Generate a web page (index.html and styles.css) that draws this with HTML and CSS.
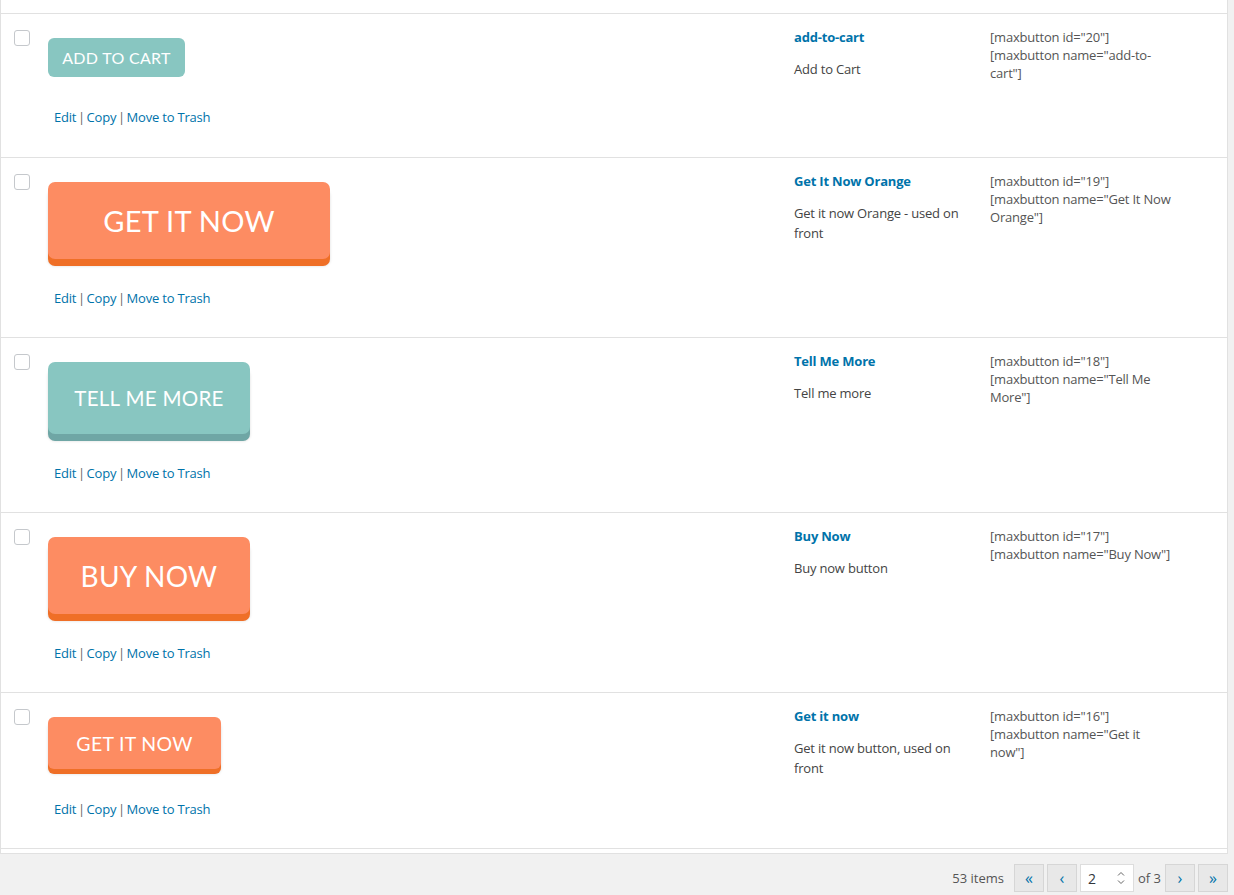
FILE: index.html
```html
<!DOCTYPE html>
<html lang="en">
<head>
    <meta charset="UTF-8">
    <meta name="viewport" content="width=device-width, initial-scale=1.0">
    <title>MaxButtons - Overview</title>
    <link rel="stylesheet" href="styles.css">
</head>
<body>
 <div class="button-list">
  <div class="row-cut"></div>

  <div class="row">
   <div class="col-check"><span class="checkbox"></span></div>
   <div class="col-preview">
    <a class="mb mb-teal mb-cart">Add to Cart</a>
    <div class="row-actions"><a>Edit</a> | <a>Copy</a> | <a>Move to Trash</a></div>
   </div>
   <div class="col-name">
    <a class="name">add-to-cart</a>
    <p class="desc">Add to Cart</p>
   </div>
   <div class="col-code">[maxbutton id="20"]<br>[maxbutton name="add-to-cart"]</div>
   <div class="col-rest"></div>
  </div>

  <div class="row">
   <div class="col-check"><span class="checkbox"></span></div>
   <div class="col-preview">
    <a class="mb mb-orange mb-getbig">Get it now</a>
    <div class="row-actions"><a>Edit</a> | <a>Copy</a> | <a>Move to Trash</a></div>
   </div>
   <div class="col-name">
    <a class="name">Get It Now Orange</a>
    <p class="desc">Get it now Orange - used on front</p>
   </div>
   <div class="col-code">[maxbutton id="19"]<br>[maxbutton name="Get It Now Orange"]</div>
   <div class="col-rest"></div>
  </div>

  <div class="row">
   <div class="col-check"><span class="checkbox"></span></div>
   <div class="col-preview">
    <a class="mb mb-teal mb-tell">Tell me more</a>
    <div class="row-actions"><a>Edit</a> | <a>Copy</a> | <a>Move to Trash</a></div>
   </div>
   <div class="col-name">
    <a class="name">Tell Me More</a>
    <p class="desc">Tell me more</p>
   </div>
   <div class="col-code">[maxbutton id="18"]<br>[maxbutton name="Tell Me More"]</div>
   <div class="col-rest"></div>
  </div>

  <div class="row">
   <div class="col-check"><span class="checkbox"></span></div>
   <div class="col-preview">
    <a class="mb mb-orange mb-buy">Buy now</a>
    <div class="row-actions"><a>Edit</a> | <a>Copy</a> | <a>Move to Trash</a></div>
   </div>
   <div class="col-name">
    <a class="name">Buy Now</a>
    <p class="desc">Buy now button</p>
   </div>
   <div class="col-code">[maxbutton id="17"]<br>[maxbutton name="Buy Now"]</div>
   <div class="col-rest"></div>
  </div>

  <div class="row">
   <div class="col-check"><span class="checkbox"></span></div>
   <div class="col-preview">
    <a class="mb mb-orange mb-getsmall">Get it now</a>
    <div class="row-actions"><a>Edit</a> | <a>Copy</a> | <a>Move to Trash</a></div>
   </div>
   <div class="col-name">
    <a class="name">Get it now</a>
    <p class="desc">Get it now button, used on front</p>
   </div>
   <div class="col-code">[maxbutton id="16"]<br>[maxbutton name="Get it now"]</div>
   <div class="col-rest"></div>
  </div>

  <div class="row-foot"></div>
 </div>

 <div class="tablenav">
  <span class="items">53 items</span>
  <a class="page-btn">&laquo;</a>
  <a class="page-btn">&lsaquo;</a>
  <span class="page-input">2
   <svg class="spin" width="8" height="16" viewBox="0 0 8 16">
    <path d="M1 5.5 L4 2.5 L7 5.5" fill="none" stroke="#666" stroke-width="1"/>
    <path d="M1 10.5 L4 13.5 L7 10.5" fill="none" stroke="#666" stroke-width="1"/>
   </svg>
  </span>
  <span class="of">of 3</span>
  <a class="page-btn">&rsaquo;</a>
  <a class="page-btn last">&raquo;</a>
 </div>
</body>
</html>
```

FILE: styles.css
```css
body {
    margin: 0;
    background-color: #f1f1f1;
    font-family: "Open Sans", "Noto Sans", sans-serif;
    font-size: 13px;
    letter-spacing: -0.2px;
    color: #444;
}
a { color: #0073aa; text-decoration: none; }

.button-list {
    width: 1228px;
    box-sizing: border-box;
    background: #fff;
    border-left: 1px solid #e1e1e1;
    border-right: 1px solid #e1e1e1;
    border-bottom: 1px solid #e1e1e1;
}
.row-cut { height: 13px; }
.row-foot { height: 4px; border-top: 1px solid #e1e1e1; }

.row {
    display: grid;
    grid-template-columns: 39px 1fr 196px 190px 47px;
    border-top: 1px solid #e1e1e1;
}

.col-check { padding: 16px 0 0 13px; }
.checkbox {
    display: block;
    width: 14px;
    height: 14px;
    border: 1px solid #c5c8cc;
    border-radius: 3px;
    background: #fff;
}

.col-preview {
    display: flex;
    flex-direction: column;
    align-items: flex-start;
    padding: 24px 0 29px 8px;
}
.row-cut + .row .col-preview { padding-bottom: 30px; }
.row-actions {
    margin-top: 29px;
    padding-left: 6px;
    line-height: 20px;
    color: #666;
    word-spacing: -1.5px;
}
.row-actions a { word-spacing: 0; }

.col-name { padding: 14px 10px 0 0; }
.name { font-weight: 700; line-height: 18px; display: block; }
.desc { margin: 14px 0 0; line-height: 19.5px; }

.col-code {
    padding: 14px 6px 0 0;
    line-height: 18px;
    color: #555;
}

/* button previews */
.mb {
    display: flex;
    align-items: center;
    justify-content: center;
    color: #fff;
    font-family: Lato, "Open Sans", sans-serif;
    text-transform: uppercase;
    letter-spacing: 0.3px;
}
.mb-teal { background-color: #88c6c1; }
.mb-orange { background-color: #fd8c62; }

.mb-cart {
    width: 137px;
    height: 39px;
    margin-bottom: 1px;
    border-radius: 6px;
    font-size: 16px;
}
.mb-getbig {
    width: 282px;
    height: 77px;
    border-radius: 7px;
    font-size: 29px;
    box-shadow: 0 7px 0 #ef6f27, 0 7px 3px rgba(0,0,0,0.15);
}
.mb-tell {
    width: 202px;
    height: 72px;
    border-radius: 7px;
    font-size: 20.5px;
    box-shadow: 0 7px 0 #6fa6a5, 0 7px 3px rgba(0,0,0,0.15);
}
.mb-buy {
    width: 202px;
    height: 77px;
    border-radius: 7px;
    font-size: 28px;
    box-shadow: 0 7px 0 #ef6f27, 0 7px 3px rgba(0,0,0,0.15);
}
.mb-getsmall {
    width: 173px;
    height: 52px;
    margin-bottom: 1px;
    border-radius: 6px;
    font-size: 19.5px;
    box-shadow: 0 5px 0 #ef6f27, 0 5px 3px rgba(0,0,0,0.15);
}

/* pagination */
.tablenav {
    display: flex;
    justify-content: flex-end;
    align-items: center;
    padding: 10px 6px 0 0;
    color: #555;
    letter-spacing: 0;
}
.items { margin-right: 10px; }
.page-btn {
    width: 28px;
    height: 26px;
    display: flex;
    align-items: center;
    justify-content: center;
    border: 1px solid #d6d6d6;
    background: #e8e8e8;
    font-size: 16px;
    margin-right: 3px;
}
.page-btn.last { margin-right: 0; }
.page-input {
    width: 52px;
    height: 26px;
    border: 1px solid #ddd;
    background: #fff;
    color: #32373c;
    font-size: 14px;
    display: flex;
    align-items: center;
    justify-content: space-between;
    text-indent: 7px;
}
.spin { margin-right: 8px; }
.of { margin: 0 4px 0 4px; }
```
